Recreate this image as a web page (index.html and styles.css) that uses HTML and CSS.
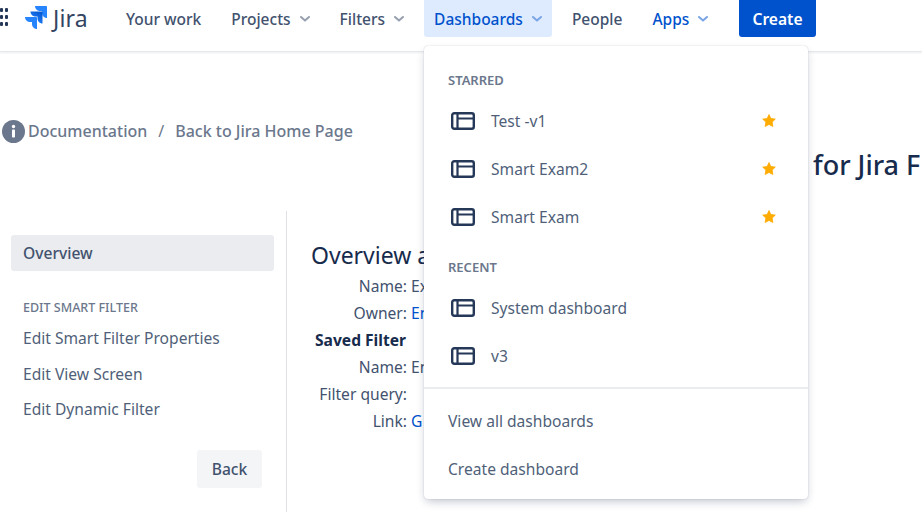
FILE: index.html
```html
<!DOCTYPE html>
<html lang="en">
<head>
<meta charset="utf-8">
<title>Jira</title>
<link rel="stylesheet" href="styles.css">
</head>
<body>
<svg class="defs" width="0" height="0" aria-hidden="true">
  <symbol id="dash" viewBox="0 0 24 18">
    <rect x="1.200" y="1.200" width="21.600" height="15.600" rx="2" fill="none" stroke="currentColor" stroke-width="2.400"/>
    <path d="M6.500 2v14M6.500 6.500h16" fill="none" stroke="currentColor" stroke-width="2.200"/>
  </symbol>
  <symbol id="star" viewBox="0 0 14 14">
    <path d="M7 .6l1.900 4 4.400.5-3.200 3 .8 4.400L7 10.400l-3.900 2.100.8-4.400-3.200-3 4.400-.5z" fill="currentColor" stroke="currentColor" stroke-width=".8" stroke-linejoin="round"/>
  </symbol>
  <symbol id="chev" viewBox="0 0 10 6">
    <path d="M1 1l4 3.600L9 1" fill="none" stroke="currentColor" stroke-width="2" stroke-linecap="round" stroke-linejoin="round"/>
  </symbol>
</svg>

<header class="topbar">
  <svg class="apps" width="8" height="18" viewBox="0 0 8 18" aria-hidden="true">
    <g fill="#253858">
      <rect x="0" y="0" width="3" height="4" rx="1"/><rect x="5" y="0" width="3" height="4" rx="1"/>
      <rect x="0" y="7" width="3" height="4" rx="1"/><rect x="5" y="7" width="3" height="4" rx="1"/>
      <rect x="0" y="14" width="3" height="4" rx="1"/><rect x="5" y="14" width="3" height="4" rx="1"/>
    </g>
  </svg>
  <div class="logo">
    <svg width="23" height="23" viewBox="0 0 23 23" aria-hidden="true">
      <defs>
        <linearGradient id="g1" x1="1" y1="0" x2="0.3" y2="1"><stop offset="0" stop-color="#0052cc"/><stop offset="1" stop-color="#2684ff"/></linearGradient>
      </defs>
      <path d="M22 0H11c0 2.800 2.200 5 5 5h2v2c0 2.800 2.200 5 5 5V1c0-.6-.4-1-1-1z" fill="#2684ff" transform="translate(-1 0)"/>
      <path d="M16.500 5.500h-11c0 2.800 2.200 5 5 5h2v2c0 2.800 2.200 5 5 5v-11c0-.6-.4-1-1-1z" fill="url(#g1)"/>
      <path d="M11 11H0c0 2.800 2.200 5 5 5h2v2c0 2.800 2.200 5 5 5V12c0-.6-.4-1-1-1z" fill="#2684ff"/>
    </svg>
    <span class="logo-word">Jira</span>
  </div>
  <nav class="nav">
    <a class="nav-item plain">Your work</a>
    <a class="nav-item">Projects<svg class="chev"><use href="#chev"/></svg></a>
    <a class="nav-item">Filters<svg class="chev"><use href="#chev"/></svg></a>
    <a class="nav-item open">Dashboards<svg class="chev"><use href="#chev"/></svg></a>
    <a class="nav-item plain">People</a>
    <a class="nav-item apps-link">Apps<svg class="chev"><use href="#chev"/></svg></a>
    <button class="create">Create</button>
  </nav>
</header>

<div class="crumbs">
  <svg class="info" width="23" height="23" viewBox="0 0 23 23" aria-hidden="true">
    <circle cx="11.500" cy="11.500" r="11.500" fill="#6b778c"/>
    <rect x="10" y="9.500" width="3" height="8" rx=".8" fill="#fff"/>
    <circle cx="11.500" cy="6.500" r="1.700" fill="#fff"/>
  </svg>
  <span>Documentation</span>
  <span class="sep">/</span>
  <span>Back to Jira Home Page</span>
</div>

<div class="page-title">for Jira F</div>

<div class="columns">
  <aside class="side">
    <div class="side-active">Overview</div>
    <div class="side-head">EDIT SMART FILTER</div>
    <a class="side-link">Edit Smart Filter Properties</a>
    <a class="side-link">Edit View Screen</a>
    <a class="side-link">Edit Dynamic Filter</a>
    <div class="side-foot"><button class="back">Back</button></div>
  </aside>
  <main class="main">
    <h2 class="main-title">Overview a</h2>
    <div class="rows">
      <div class="lbl">Name:</div><div class="val">Ex</div>
      <div class="lbl">Owner:</div><div class="val link">En</div>
      <div class="section">Saved Filter</div>
      <div class="lbl">Name:</div><div class="val">En</div>
      <div class="lbl">Filter query:</div><div class="val"></div>
      <div class="lbl dark">Link:</div><div class="val link">G</div>
    </div>
  </main>
</div>

<div class="menu">
  <div class="menu-body">
    <div class="menu-head">STARRED</div>
    <div class="menu-row"><svg class="dash"><use href="#dash"/></svg><span class="grow">Test -v1</span><svg class="star"><use href="#star"/></svg></div>
    <div class="menu-row"><svg class="dash"><use href="#dash"/></svg><span class="grow">Smart Exam2</span><svg class="star"><use href="#star"/></svg></div>
    <div class="menu-row"><svg class="dash"><use href="#dash"/></svg><span class="grow">Smart Exam</span><svg class="star"><use href="#star"/></svg></div>
    <div class="menu-head second">RECENT</div>
    <div class="menu-row"><svg class="dash"><use href="#dash"/></svg><span class="grow">System dashboard</span></div>
    <div class="menu-row"><svg class="dash"><use href="#dash"/></svg><span class="grow">v3</span></div>
  </div>
  <div class="menu-foot">
    <div class="menu-row">View all dashboards</div>
    <div class="menu-row">Create dashboard</div>
  </div>
</div>
</body>
</html>
```
FILE: styles.css
```css
* { box-sizing: border-box; }
html, body { margin: 0; height: 523px; overflow: hidden; }
body {
  position: relative;
  width: 922px;
  background: #fff;
  font-family: "Noto Sans", "Open Sans", sans-serif;
  font-size: 15.6px;
  color: #42526e;
}
.defs { position: absolute; }
button { font: inherit; border: 0; }

.topbar {
  display: flex;
  align-items: flex-start;
  height: 52px;
  border-bottom: 1px solid #e6e8ec;
  box-shadow: 0 1px 2px rgba(9, 30, 66, .08);
}
.apps { margin-top: 8px; flex: none; }
.logo { display: flex; align-items: flex-start; gap: 5px; margin: 6px 0 0 17px; width: 91px; flex: none; }
.logo-word { font-size: 23px; line-height: 24px; color: #344563; letter-spacing: .2px; }
.nav { display: flex; align-items: center; width: 700px; height: 37px; }
.nav-item {
  display: flex;
  align-items: center;
  gap: 9px;
  height: 37px;
  padding: 0 10px;
  margin-right: 10px;
  border-radius: 0 0 3px 3px;
  font-size: 15.500px;
  font-weight: 500;
  color: #42526e;
}
.nav-item.open { background: #deebff; color: #0052cc; }
.nav-item.apps-link { color: #0052cc; }
.chev { width: 10px; height: 6px; color: #97a0af; }
.open .chev, .apps-link .chev { color: #7aa5e6; }
.create {
  height: 37px;
  width: 77px;
  margin-left: auto;
  border-radius: 0 0 3px 3px;
  background: #0052cc;
  color: #fff;
  font-weight: 600;
}

.crumbs {
  display: flex;
  align-items: center;
  gap: 3px;
  height: 24px;
  margin: 67px 0 0 2px;
  color: #6b778c;
  font-weight: 500;
  font-size: 16px;
}
.sep { margin: 0 8px; font-weight: 400; }
.page-title {
  margin-top: 5px;
  padding-left: 813px;
  height: 34px;
  font-size: 27px;
  line-height: 34px;
  font-weight: 500;
  white-space: nowrap;
  color: #172b4d;
}

.columns { display: flex; margin-top: 29px; height: 301px; }
.side { width: 287px; padding: 24px 12px 0 11px; border-right: 1px solid #dfe1e6; flex: none; }
.side-active {
  height: 36px;
  padding-left: 12px;
  line-height: 37px;
  border-radius: 3px;
  background: #ebecf0;
  font-weight: 500;
}
.side-head {
  margin: 29px 0 0 12px;
  font-size: 12.500px;
  line-height: 16px;
  font-weight: 500;
  color: #6b778c;
}
.side-link { display: block; margin-left: 12px; line-height: 35.500px; height: 35.500px; color: #505f79; }
.side-head + .side-link { margin-top: 5px; }
.side-foot { display: flex; justify-content: flex-end; margin: 22px 12px 0 0; }
.back {
  width: 65px;
  height: 38px;
  border-radius: 3px;
  background: #f4f5f7;
  color: #42526e;
  font-weight: 500;
}

.main { padding: 28px 0 0 24px; flex: 1; }
.main-title { margin: 0; font-size: 23px; line-height: 32px; font-weight: 400; color: #172b4d; }
.rows { display: grid; grid-template-columns: 96px 1fr; column-gap: 4px; grid-auto-rows: 27px; line-height: 27px; margin-top: 2px; }
.lbl { text-align: right; white-space: nowrap; }
.lbl.dark { color: #42526e; }
.val { white-space: nowrap; }
.link { color: #0052cc; }
.section { grid-column: 1 / -1; padding-left: 4px; font-weight: 700; color: #172b4d; }

.menu {
  position: absolute;
  left: 424px;
  top: 46px;
  width: 384px;
  height: 453px;
  border-radius: 4px;
  background: #fff;
  box-shadow: 0 4px 10px -2px rgba(9, 30, 66, .28), 0 0 1px rgba(9, 30, 66, .31);
}
.menu-body { height: 343px; padding-top: 24px; border-bottom: 2px solid #ebecf0; }
.menu-head { padding-left: 24px; height: 27px; line-height: 20px; font-size: 13px; font-weight: 600; color: #6b778c; }
.menu-head.second { height: 27px; margin-top: 16px; }
.menu-row { display: flex; align-items: center; height: 48px; padding: 0 32px 0 24px; color: #505f79; }
.dash { width: 24px; height: 18px; margin: 0 16px 0 3px; color: #253858; flex: none; }
.grow { flex: 1; }
.star { width: 14px; height: 14px; margin-bottom: 1px; color: #ffab00; }
.menu-foot { padding-top: 8px; }
```
